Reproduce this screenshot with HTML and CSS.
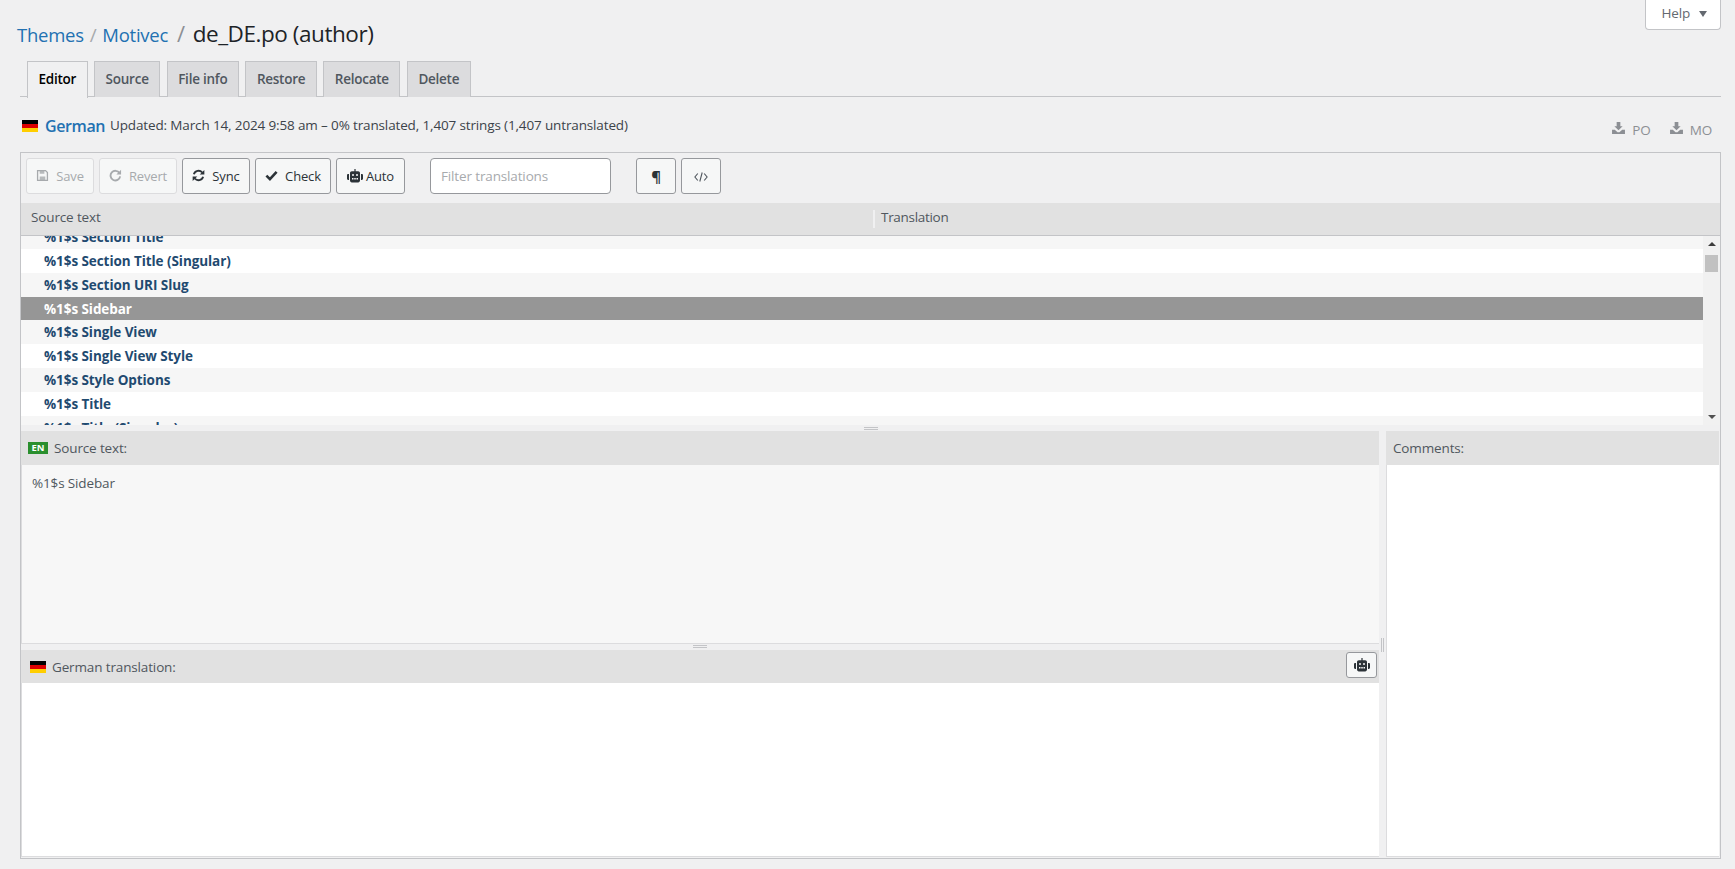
FILE: index.html
```html
<!DOCTYPE html>
<html lang="en">
<head>
  <meta charset="UTF-8">
  <title>de_DE.po (author)</title>
  <link rel="stylesheet" href="styles.css">
</head>
<body>

<svg class="defs" width="0" height="0" aria-hidden="true">
  <symbol id="flag-de" viewBox="0 0 16 12">
    <rect width="16" height="4" y="0" fill="#000"/>
    <rect width="16" height="4" y="4" fill="#d00"/>
    <rect width="16" height="4" y="8" fill="#ffce00"/>
  </symbol>
  <symbol id="robot" viewBox="0 0 16 14">
    <path fill="currentColor" d="M7.400 0h1.200v2.200h2.600c1 0 1.800.8 1.800 1.800v7.600c0 1-.8 1.800-1.800 1.800H4.800c-1 0-1.800-.8-1.800-1.800V4c0-1 .8-1.800 1.800-1.800h2.600z"/>
    <path fill="currentColor" d="M0 6.200c0-.7.5-1.200 1.200-1.200H2v6h-.8C.5 11 0 10.500 0 9.800zM14 5h.8c.7 0 1.200.5 1.200 1.200v3.600c0 .7-.5 1.200-1.200 1.200H14z"/>
    <rect fill="#f6f7f7" x="5" y="5" width="2" height="2" rx="1"/>
    <rect fill="#f6f7f7" x="9" y="5" width="2" height="2" rx="1"/>
    <rect fill="#f6f7f7" x="5" y="9" width="1.500" height="1.500"/>
    <rect fill="#f6f7f7" x="7.250" y="9" width="1.500" height="1.500"/>
    <rect fill="#f6f7f7" x="9.500" y="9" width="1.500" height="1.500"/>
  </symbol>
  <symbol id="download" viewBox="0 0 14 13">
    <path fill="currentColor" d="M5 0h4v4.500h2.500L7 9 2.500 4.500H5zM0 8.500h3L6 11.200h2L11 8.500h3V13H0z"/>
  </symbol>
</svg>

<div class="wrap">
  <div class="top">
    <h1 class="crumbs">
      <a class="crumb" href="#">Themes</a><span class="sep">/</span><a class="crumb" href="#">Motivec</a><span class="sep sep-last">/</span><span class="current">de_DE.po (author)</span>
    </h1>
    <button class="help" type="button">Help <span class="caret"></span></button>
  </div>

  <nav class="tabs">
    <a class="tab tab-active" href="#">Editor</a>
    <a class="tab" href="#">Source</a>
    <a class="tab" href="#">File info</a>
    <a class="tab" href="#">Restore</a>
    <a class="tab" href="#">Relocate</a>
    <a class="tab" href="#">Delete</a>
  </nav>

  <div class="meta">
    <svg class="flag"><use href="#flag-de"/></svg>
    <a class="lang" href="#">German</a>
    <span class="stats">Updated: March 14, 2024 9:58 am – 0% translated, 1,407 strings (1,407 untranslated)</span>
    <span class="downloads">
      <a class="dl" href="#"><svg class="dl-icon"><use href="#download"/></svg>PO</a>
      <a class="dl" href="#"><svg class="dl-icon"><use href="#download"/></svg>MO</a>
    </span>
  </div>

  <div class="panel">
    <div class="toolbar">
      <button class="btn btn-off btn-save" type="button">
        <svg class="ico" viewBox="0 0 14 14"><path fill="none" stroke="currentColor" stroke-width="1.400" d="M1.700 1.700h8.600l2 2v8.600H1.700z"/><path fill="currentColor" d="M4 1.500h5v3.500H4zM4 8h6v4.500H4z" opacity=".8"/></svg>Save
      </button>
      <button class="btn btn-off btn-revert" type="button">
        <svg class="ico" viewBox="0 0 14 14"><path fill="none" stroke="currentColor" stroke-width="2" d="M11.300 4.400A5.200 5.200 0 1 0 12 8"/><path fill="currentColor" d="M13 .8v5H8z"/></svg>Revert
      </button>
      <button class="btn btn-sync" type="button">
        <svg class="ico" viewBox="0 0 14 14"><path fill="none" stroke="currentColor" stroke-width="2" d="M2 5.600A5.200 5.200 0 0 1 11 3.800M12 8.400A5.200 5.200 0 0 1 3 10.200"/><path fill="currentColor" d="M13.300 1v5h-5zM.7 13V8h5z"/></svg>Sync
      </button>
      <button class="btn btn-check" type="button">
        <svg class="ico" viewBox="0 0 14 14"><path fill="none" stroke="currentColor" stroke-width="2.800" d="M1.500 7.200l3.800 3.800 7.200-7.800"/></svg>Check
      </button>
      <button class="btn btn-auto" type="button">
        <svg class="ico-robot"><use href="#robot"/></svg>Auto
      </button>
      <input class="filter" type="text" placeholder="Filter translations">
      <button class="btn btn-square btn-para" type="button">¶</button>
      <button class="btn btn-square btn-code" type="button">
        <svg class="ico-code" viewBox="0 0 14 10"><path fill="none" stroke="currentColor" stroke-width="1.100" d="M3.800 1.500L.9 5l2.900 3.500M10.200 1.500L13.100 5l-2.900 3.500M8.200.5L5.800 9.500"/></svg>
      </button>
    </div>

    <div class="columns">
      <div class="col-source">Source text</div>
      <div class="col-target">Translation</div>
    </div>

    <div class="list-box">
      <div class="list">
        <ul class="rows">
          <li class="row">%1$s Section Title</li>
          <li class="row">%1$s Section Title (Singular)</li>
          <li class="row">%1$s Section URI Slug</li>
          <li class="row row-selected">%1$s Sidebar</li>
          <li class="row">%1$s Single View</li>
          <li class="row">%1$s Single View Style</li>
          <li class="row">%1$s Style Options</li>
          <li class="row">%1$s Title</li>
          <li class="row">%1$s Title (Singular)</li>
        </ul>
      </div>
      <div class="scrollbar">
        <span class="arrow arrow-up"></span>
        <span class="thumb"></span>
        <span class="arrow arrow-down"></span>
      </div>
    </div>

    <div class="gutter-h"><span class="grip"></span></div>

    <div class="lower">
      <div class="main-pane">
        <div class="pane-head"><span class="badge">EN</span>Source text:</div>
        <div class="source-body">%1$s Sidebar</div>
        <div class="gutter-h gutter-inner"><span class="grip"></span></div>
        <div class="pane-head pane-head-target">
          <svg class="flag flag-target"><use href="#flag-de"/></svg>German translation:
          <button class="btn btn-pane" type="button"><svg class="ico-robot"><use href="#robot"/></svg></button>
        </div>
        <div class="target-body"></div>
      </div>
      <div class="gutter-v"><span class="grip-v"></span></div>
      <div class="side-pane">
        <div class="pane-head pane-head-side">Comments:</div>
        <div class="comments-body"></div>
      </div>
    </div>
  </div>
</div>

</body>
</html>
```

FILE: styles.css
```css
html, body {
  height: 100%;
}
body {
  margin: 0;
  background: #f0f0f1;
  color: #3c434a;
  font-family: "Open Sans", "Liberation Sans", sans-serif;
  font-size: 13.500px;
  letter-spacing: -0.14px;
  overflow: hidden;
}
a {
  text-decoration: none;
}
.defs {
  display: block;
  height: 0;
}
.wrap {
  padding: 0 14px 0 20px;
}

/* header */
.top {
  display: flex;
  justify-content: space-between;
  align-items: flex-start;
  height: 61px;
  margin-left: -3px;
}
.crumbs {
  margin: 18px 0 0;
  font-size: 22.500px;
  line-height: 30px;
  font-weight: 400;
  color: #1d2327;
  letter-spacing: -0.45px;
}
.crumb {
  color: #2271b1;
  font-size: 18.500px;
  letter-spacing: -0.25px;
}
.sep {
  margin: 0 6px;
  color: #a7aaad;
  font-size: 19px;
}
.sep-last {
  margin: 0 8px 0 9px;
  color: #8c8f94;
  font-size: 22px;
}
.help {
  width: 76px;
  height: 30px;
  padding: 0 0 4px 2px;
  background: #fff;
  border: 1px solid #c3c4c7;
  border-top: 0;
  border-radius: 0 0 4px 4px;
  color: #646970;
  font: inherit;
  letter-spacing: inherit;
}
.caret {
  display: inline-block;
  margin-left: 5px;
  border-style: solid;
  border-width: 6px 4px 0;
  border-color: #646970 transparent transparent;
  vertical-align: 1px;
}

/* tabs */
.tabs {
  display: flex;
  gap: 6.500px;
  height: 36px;
  padding-left: 7px;
  border-bottom: 1px solid #c3c4c7;
  box-sizing: border-box;
}
.tab {
  height: 36px;
  box-sizing: border-box;
  padding: 0 10.500px;
  background: #dcdcde;
  border: 1px solid #c3c4c7;
  border-bottom: 0;
  color: #50575e;
  font-weight: 600;
  letter-spacing: -0.25px;
  line-height: 35px;
}
.tab-active {
  background: #f0f0f1;
  color: #000;
  height: 37px;
}

/* language line */
.meta {
  display: flex;
  align-items: center;
  height: 55px;
  padding-left: 2px;
}
.flag {
  display: block;
  width: 16px;
  height: 12px;
  flex: none;
  margin-top: 2px;
}
.lang {
  margin: 2px 5px 0 7px;
  color: #2271b1;
  font-size: 16px;
  font-weight: 600;
  letter-spacing: -0.4px;
}
.stats {
  margin-top: 1px;
  color: #3c434a;
}
.downloads {
  display: flex;
  gap: 19px;
  margin-left: auto;
  margin-right: 9px;
  margin-top: 10px;
}
.dl {
  display: flex;
  align-items: center;
  gap: 7px;
  color: #8c8f94;
}
.dl-icon {
  width: 13px;
  height: 12px;
  margin-top: -3px;
}

/* editor panel */
.panel {
  height: 707px;
  box-sizing: border-box;
  border: 1px solid #c3c4c7;
  display: flex;
  flex-direction: column;
}
.toolbar {
  display: flex;
  align-items: center;
  height: 50px;
  flex: none;
  padding: 0 0 4px 5px;
  box-sizing: border-box;
}
.btn {
  display: flex;
  align-items: center;
  justify-content: center;
  height: 36px;
  box-sizing: border-box;
  padding: 0 0 1px;
  background: #f6f7f7;
  border: 1px solid #96989c;
  border-radius: 3px;
  color: #2c3338;
  font: inherit;
  letter-spacing: inherit;
  font-size: 13px;
}
.btn-off {
  border-color: #dcdcde;
  color: #a7aaad;
}
.ico {
  width: 13px;
  height: 13px;
  margin-right: 7px;
}
.ico-robot {
  display: block;
  width: 16px;
  height: 14px;
}
.btn-auto .ico-robot {
  margin-right: 3px;
}
.btn-save { width: 68px; margin-right: 5px; }
.btn-revert { width: 78px; margin-right: 5px; }
.btn-sync { width: 68px; margin-right: 5px; }
.btn-check { width: 76px; margin-right: 5px; }
.btn-auto { width: 69px; margin-right: 25px; }
.filter {
  width: 181px;
  height: 36px;
  box-sizing: border-box;
  margin: 0 25px 0 0;
  padding: 0 10px 1px;
  background: #fff;
  border: 1px solid #96989c;
  border-radius: 4px;
  font: inherit;
  letter-spacing: inherit;
}
.filter::placeholder {
  color: #a7aaad;
  opacity: 1;
}
.btn-square {
  width: 40px;
}
.btn-para {
  margin-right: 5px;
  font-size: 15px;
  font-weight: 700;
}
.ico-code {
  width: 14px;
  height: 10px;
  color: #50575e;
  margin-top: 3px;
}

/* column headers */
.columns {
  display: flex;
  flex: none;
  height: 33px;
  box-sizing: border-box;
  background: #e1e1e1;
  border-bottom: 1px solid #c3c4c7;
  line-height: 29px;
  color: #50575e;
}
.col-source {
  width: 852px;
  padding-left: 10px;
  box-sizing: border-box;
}
.col-target {
  padding-left: 6px;
  border-left: 2px solid #f0f0f1;
  height: 18px;
  margin-top: 7px;
  line-height: 15px;
  letter-spacing: -0.3px;
}

/* string list */
.list-box {
  display: flex;
  flex: none;
  height: 189px;
}
.list {
  flex: 1;
  overflow: hidden;
  background: #fff;
}
.rows {
  margin: -11px 0 0;
  padding: 0;
  list-style: none;
}
.row {
  height: 23.860px;
  padding-left: 23px;
  line-height: 25.500px;
  font-weight: 700;
  color: #1f4a70;
  background: #fff;
  letter-spacing: -0.07px;
}
.row:nth-child(odd) {
  background: #f6f6f6;
}
.row-selected,
.row-selected:nth-child(even) {
  background: #969696;
  color: #fff;
}
.scrollbar {
  position: relative;
  width: 17px;
  flex: none;
  background: #f1f1f1;
}
.arrow {
  position: absolute;
  left: 5px;
  border-style: solid;
  border-color: transparent;
}
.arrow-up {
  top: 6px;
  border-width: 0 4px 4px;
  border-bottom-color: #3c3c3c;
}
.arrow-down {
  bottom: 6px;
  border-width: 4px 4px 0;
  border-top-color: #505050;
}
.thumb {
  position: absolute;
  top: 19px;
  left: 2px;
  width: 13px;
  height: 17px;
  background: #c1c1c1;
}

/* gutters */
.gutter-h {
  display: flex;
  justify-content: center;
  align-items: center;
  flex: none;
  height: 6px;
  background: #f0f0f1;
}
.gutter-inner {
  border-top: 1px solid #dcdcde;
  height: 7px;
  box-sizing: border-box;
  padding-bottom: 2px;
}
.grip {
  display: block;
  width: 14px;
  height: 3px;
  border-top: 1px solid #c3c4c7;
  border-bottom: 1px solid #c3c4c7;
  box-sizing: border-box;
}
.gutter-v {
  display: flex;
  align-items: center;
  justify-content: center;
  width: 7px;
  flex: none;
  background: #f0f0f1;
}
.grip-v {
  display: block;
  width: 3px;
  height: 14px;
  border-left: 1px solid #c3c4c7;
  border-right: 1px solid #c3c4c7;
  box-sizing: border-box;
}

/* lower panes */
.lower {
  display: flex;
  flex: 1;
  min-height: 0;
}
.main-pane {
  display: flex;
  flex-direction: column;
  width: 1358px;
  flex: none;
}
.side-pane {
  display: flex;
  flex-direction: column;
  flex: 1;
  padding-right: 1px;
}
.pane-head {
  display: flex;
  align-items: center;
  flex: none;
  height: 34px;
  box-sizing: border-box;
  padding-left: 7px;
  background: #e1e1e1;
  color: #50575e;
}
.pane-head-target {
  height: 33px;
  padding-left: 9px;
  padding-top: 1px;
}
.pane-head-side {
  padding-left: 7px;
}
.badge {
  width: 20px;
  height: 12px;
  margin-right: 6px;
  background: #2a8f2e;
  color: #fff;
  font-size: 9.500px;
  font-weight: 700;
  line-height: 12px;
  text-align: center;
  letter-spacing: 0;
}
.flag-target {
  margin: 0 6px 0 0;
}
.btn-pane {
  width: 31px;
  height: 26px;
  margin: 0 2px 4px auto;
  padding: 0;
  background: #f6f7f7;
}
.source-body {
  flex: 1;
  padding: 9px 10px;
  line-height: 18px;
  background: #f7f7f7;
  border-left: 1px solid #dcdcde;
  color: #50575e;
  min-height: 0;
}
.target-body,
.comments-body {
  background: #fff;
  border-left: 1px solid #dcdcde;
  border-bottom: 1px solid #dcdcde;
  margin-bottom: 1px;
}
.target-body {
  flex: none;
  height: 173px;
}
.comments-body {
  flex: 1;
}
```
